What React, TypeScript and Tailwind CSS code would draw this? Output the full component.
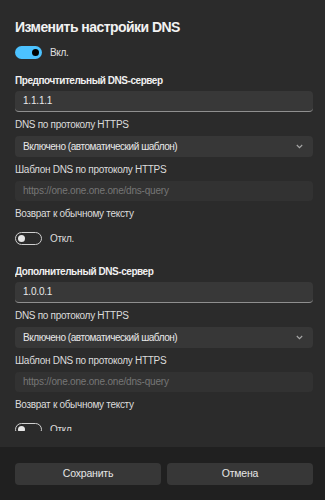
import React from "react";

const font = { fontFamily: '"Liberation Sans", Arial, sans-serif' };

function ToggleOn() {
  return (
    <div className="w-[27px] h-[13px] rounded-full bg-[#4cc2ff] flex items-center justify-end pr-[3px]">
      <div className="w-[7px] h-[7px] rounded-full bg-black" />
    </div>
  );
}

function ToggleOff() {
  return (
    <div className="w-[27px] h-[13px] rounded-full border border-[#cfcfcf] flex items-center pl-[2px]">
      <div className="w-[7px] h-[7px] rounded-full bg-[#e6e6e6]" />
    </div>
  );
}

function TextInput({ value }: { value: string }) {
  return (
    <div className="h-[21px] rounded-[4px] bg-[#383838] border-b border-[#8f8f8f] flex items-center pl-[8px] text-[10px] tracking-[-0.2px] leading-[14px] text-[#e8e8e8]">
      {value}
    </div>
  );
}

function DisabledInput({ value }: { value: string }) {
  return (
    <div className="h-[20px] rounded-[4px] bg-[#323232] flex items-center pl-[8px] text-[10px] tracking-[-0.2px] leading-[14px] text-[#767676]">
      {value}
    </div>
  );
}

function Select({ value }: { value: string }) {
  return (
    <div className="h-[21px] rounded-[4px] bg-[#373737] flex items-center justify-between pl-[8px] pr-[10px] text-[10px] tracking-[-0.45px] leading-[14px] text-[#e8e8e8]">
      <span>{value}</span>
      <svg width="7" height="5" viewBox="0 0 7 5" fill="none">
        <path d="M0.8 1 L3.5 3.7 L6.2 1" stroke="#a8a8a8" strokeWidth="1.1" />
      </svg>
    </div>
  );
}

function Label({ children, bold, className }: { children: React.ReactNode; bold?: boolean; className?: string }) {
  return (
    <div
      className={`h-[14px] leading-[14px] text-[10px] ${bold ? "font-bold text-[#f0f0f0] tracking-[-0.45px]" : "text-[#dcdcdc] tracking-[-0.3px]"} ${className ?? ""}`}
    >
      {children}
    </div>
  );
}

function Section({ title, ip }: { title: string; ip: string }) {
  return (
    <div className="flex flex-col">
      <Label bold>{title}</Label>
      <div className="mt-[3px]">
        <TextInput value={ip} />
      </div>
      <Label className="mt-[6px]">DNS по протоколу HTTPS</Label>
      <div className="mt-[4px]">
        <Select value="Включено (автоматический шаблон)" />
      </div>
      <Label className="mt-[6px]">Шаблон DNS по протоколу HTTPS</Label>
      <div className="mt-[4px]">
        <DisabledInput value="https://one.one.one.one/dns-query" />
      </div>
      <Label className="mt-[6px]">Возврат к обычному тексту</Label>
      <div className="mt-[11px] h-[13px] flex items-center gap-[8px]">
        <ToggleOff />
        <span className="text-[10px] tracking-[-0.3px] leading-[13px] text-[#dcdcdc]">Откл.</span>
      </div>
    </div>
  );
}

export default function App() {
  return (
    <div className="w-[325px] h-[500px] bg-[#2b2b2b] flex flex-col overflow-hidden" style={font}>
      <div className="h-[447px] pb-[16px] pl-[15px] pr-[12px] flex flex-col">
        <div className="flex-1 overflow-hidden flex flex-col pt-[17px]">
          <div className="text-[14px] tracking-[-0.55px] leading-[20px] font-bold text-[#f2f2f2]">Изменить настройки DNS</div>
          <div className="mt-[9px] h-[13px] flex items-center gap-[8px]">
            <ToggleOn />
            <span className="text-[10px] tracking-[-0.3px] leading-[13px] text-[#e0e0e0]">Вкл.</span>
          </div>
          <div className="mt-[15px]">
            <Section title="Предпочтительный DNS-сервер" ip="1.1.1.1" />
          </div>
          <div className="mt-[20px]">
            <Section title="Дополнительный DNS-сервер" ip="1.0.0.1" />
          </div>
        </div>
      </div>
      <div className="flex-1 bg-[#202020] pt-[16px] pl-[15px] pr-[12px] flex gap-[6px] items-start">
        <button className="flex-1 h-[22px] rounded-[4px] bg-[#373737] text-[10.5px] tracking-[-0.2px] text-[#e6e6e6]">Сохранить</button>
        <button className="flex-1 h-[22px] rounded-[4px] bg-[#373737] text-[10.5px] tracking-[-0.2px] text-[#e6e6e6]">Отмена</button>
      </div>
    </div>
  );
}
